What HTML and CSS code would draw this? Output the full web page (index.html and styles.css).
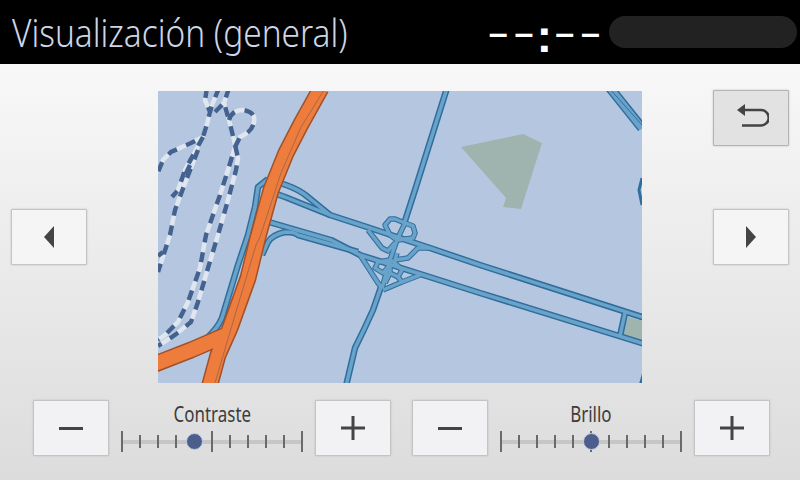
FILE: index.html
```html
<!DOCTYPE html>
<html lang="es">
<head>
    <meta charset="UTF-8">
    <meta name="viewport" content="width=device-width, initial-scale=1.0">
    <title>Visualización (general)</title>
    <link rel="stylesheet" href="styles.css">
</head>
<body>
    <header class="topbar">
        <div class="title-wrap"><h1 class="title">Visualización (general)</h1></div>
        <div class="clock">–<span class="dash-end">–</span><span class="colon">:</span>––</div>
        <div class="pill"></div>
    </header>

    <main class="screen">
        <section class="stage">
            <div class="side side-left">
                <button class="btn">
                    <svg width="10" height="22" viewBox="0 0 10 22"><path class="glyph" d="M10 0V22L0 11Z"/></svg>
                </button>
            </div>

            <svg class="map" width="484" height="292" viewBox="158 91 484 292">
                <defs>
                    <g id="roads">
                        <path d="M447 88L415 190L404 224"/>
                        <path d="M268 179L286 185Q300 190 308 197L330 215L370 228L430 248L480 265L645 318"/>
                        <path d="M268 191L285 197L330 215"/>
                        <path d="M268 179L258 187L255 207L248 235L238 265L222 318Q218 328 205 340"/>
                        <path d="M262 220L331 240L360 255L417 273L480 293L645 344"/>
                        <path d="M262 255L268 242Q272 235 285 232Q295 232 298 235L358 252"/>
                        <path d="M381 287L373 310Q364 330 355 348L346 386"/>
                        <path d="M625 313L620 336"/>
                    </g>
                    <g id="ramps">
                        <path d="M405 223L397 240L390 260L382 288"/>
                        <path d="M405 223L395 219L390 219L385 225L390 235L397 240"/>
                        <path d="M405 223L413 226L415 233L413 238L398 240"/>
                        <path d="M368 230L382 248L388 251L395 243"/>
                        <path d="M430 248L418 248L408 258L395 260L397 253"/>
                        <path d="M360 255L378 283L382 288"/>
                        <path d="M420 275L402 282L383 290"/>
                        <path d="M390 260L378 262L375 268L383 273L390 265"/>
                        <path d="M390 265L390 273L398 277L402 270L395 263L390 260"/>
                        <path d="M390 273L385 283M398 277L402 282"/>
                    </g>
                    <g id="rails">
                        <path d="M207 88L205 100L210 112L207 124L203 137L191 143L171 152L163 160L158 172"/>
                        <path d="M219 88L212 105L210 112"/>
                        <path d="M229 88L224 103L229 120L234 140L238 158L236 170L228 200L218 235L208 268L198 302L191 322L175 335L158 346"/>
                        <path d="M215 112L225 102"/>
                        <path d="M229 120Q232 110 243 110Q256 112 254 122Q252 132 240 137L235 147L228 170L220 195L206 235L200 268L188 302L178 322L165 335L158 340"/>
                        <path d="M203 137L185 170L178 190L172 197"/>
                        <path d="M198 150L187 178L175 210L170 235L158 272"/>
                        <path d="M190 165L183 180"/>
                        <path d="M163 252L158 256"/>
                    </g>
                </defs>

                <rect x="158" y="91" width="484" height="292" class="water"/>
                <path class="park" d="M461 147L523 134L542 143L521 209L503 207L506 198Z"/>
                <path class="park" d="M628 317L645 322L645 341L623 335Z"/>

                <use href="#rails" class="rail-base"/>
                <use href="#rails" class="rail-dash"/>

                <path class="trunk-casing" d="M610 88L642 128"/>
                <path class="trunk-fill" d="M610 88L642 128"/>
                <path class="road-line" d="M609 88L642 125"/>
                <path class="edge-casing" d="M642 178L639 190L642 205M644 372L640 386"/>

                <use href="#roads" class="road-casing"/>
                <use href="#ramps" class="ramp-casing"/>
                <use href="#roads" class="road-fill"/>
                <use href="#ramps" class="ramp-fill"/>

                <path class="hwy-casing" d="M321 88L301 124L286 153L271 190L258 237L248 278L230 328L218 355L209 388M226 335L191 350L155 364"/>
                <path class="hwy-fill" d="M321 88L301 124L286 153L271 190L258 237L248 278L230 328L218 355L209 388M226 335L191 350L155 364"/>
                <path class="hwy-line" d="M324 90L301 127L281 173L260 237L256 245L230 332L215 383"/>
            </svg>

            <div class="side side-right">
                <button class="btn btn-back">
                    <svg class="back-icon" width="32" height="24" viewBox="0 0 32 24">
                        <path class="glyph" d="M0 6L8 0V12Z"/>
                        <path class="glyph-line" d="M7 6H24A6.500 6.500 0 0 1 24 21.500H5"/>
                    </svg>
                </button>
                <button class="btn btn-next">
                    <svg width="10" height="22" viewBox="0 0 10 22"><path class="glyph" d="M0 0V22L10 11Z"/></svg>
                </button>
            </div>
        </section>

        <section class="controls">
            <div class="adjust">
                <button class="btn"><svg width="24" height="3" viewBox="0 0 24 3"><path class="glyph" d="M0 0H24V3H0Z"/></svg></button>
                <div class="slider">
                    <div class="slider-label">Contraste</div>
                    <div class="track">
                        <span class="tick major"></span><span class="tick"></span><span class="tick"></span><span class="tick"></span><span class="tick"></span>
                        <span class="tick major"></span><span class="tick"></span><span class="tick"></span><span class="tick"></span><span class="tick"></span>
                        <span class="tick major"></span>
                        <span class="knob" style="left: 40%"></span>
                    </div>
                </div>
                <button class="btn"><svg width="24" height="24" viewBox="0 0 24 24"><path class="glyph" d="M10.500 0H13.500V10.500H24V13.500H13.500V24H10.500V13.500H0V10.500H10.500Z"/></svg></button>
            </div>
            <div class="adjust">
                <button class="btn"><svg width="24" height="3" viewBox="0 0 24 3"><path class="glyph" d="M0 0H24V3H0Z"/></svg></button>
                <div class="slider">
                    <div class="slider-label">Brillo</div>
                    <div class="track">
                        <span class="tick major"></span><span class="tick"></span><span class="tick"></span><span class="tick"></span><span class="tick"></span>
                        <span class="tick major"></span><span class="tick"></span><span class="tick"></span><span class="tick"></span><span class="tick"></span>
                        <span class="tick major"></span>
                        <span class="knob" style="left: 50%"></span>
                    </div>
                </div>
                <button class="btn"><svg width="24" height="24" viewBox="0 0 24 24"><path class="glyph" d="M10.500 0H13.500V10.500H24V13.500H13.500V24H10.500V13.500H0V10.500H10.500Z"/></svg></button>
            </div>
        </section>
    </main>
</body>
</html>
```

FILE: styles.css
```css
* { box-sizing: border-box; }
body { margin: 0; width: 800px; height: 480px; overflow: hidden; font-family: "Noto Sans", sans-serif; background: #000; }

.topbar { height: 64px; background: #000; display: flex; align-items: center; padding: 0 3px 0 12px; }
.title-wrap { flex: 1; }
.title { display: inline-block; margin: 0; font-weight: 300; font-size: 38px; color: #cdd6e6; white-space: nowrap; transform: scaleX(0.88); transform-origin: left center; }
.clock { font-family: "Liberation Sans", sans-serif; font-weight: bold; font-size: 34px; letter-spacing: 7px; color: #fff; margin-right: 2px; display: flex; align-items: center; }
.dash-end { letter-spacing: 3px; }
.colon { font-size: 47px; letter-spacing: 3px; position: relative; top: 3px; }
.pill { width: 188px; height: 32px; background: #222; border-radius: 16px; }

.screen { height: 416px; background: linear-gradient(to bottom, #f8f8f8, #dcdcdc); padding-top: 27px; }
.stage { display: grid; grid-template-columns: 158px 484px 158px; height: 292px; }
.map { display: block; }

.side { display: flex; flex-direction: column; align-items: center; }
.side-left { padding: 118px 60px 0 0; }
.side-right { padding: 0 0 0 60px; margin-top: -1px; gap: 63px; }

.btn { width: 76px; height: 56px; padding: 0; flex: none; display: flex; align-items: center; justify-content: center; background: #f5f5f6; border: 1px solid #c4c4c4; box-shadow: 0 0 2px #bbb; border-radius: 1px; }
.btn-back { background: #e2e2e2; border-color: #b4b4b4; }
.back-icon { margin: 0 0 5px 3px; }
.glyph { fill: #444; }
.glyph-line { fill: none; stroke: #444; stroke-width: 2.500; }

.controls { display: flex; gap: 21px; padding: 17px 0 0 33px; }
.adjust { display: flex; gap: 12px; }
.adjust .btn { background: #f2f2f4; }
.slider { width: 182px; display: flex; flex-direction: column; align-items: center; }
.slider-label { height: 31px; line-height: 26px; font-size: 22px; color: #3c3c3c; transform: scaleX(0.77); }
.track { position: relative; width: 182px; height: 21px; display: flex; justify-content: space-between; align-items: center; background: linear-gradient(#c6c6c6, #c6c6c6) center / 100% 4px no-repeat; }
.tick { width: 2px; height: 13px; background: #6a6a6a; }
.tick.major { height: 21px; }
.knob { position: absolute; top: 2px; width: 17px; height: 17px; margin-left: -8px; border-radius: 50%; background: #4c5f8c; border: 1.500px solid #c9cfe8; }

.water { fill: #b5c7e0; }
.park { fill: #9fb4ae; }

.rail-base { fill: none; stroke: #dfe6f0; stroke-width: 4.500; }
.rail-dash { fill: none; stroke: #44628f; stroke-width: 4.500; stroke-dasharray: 10 10; }

.road-casing { fill: none; stroke: #2f6e9c; stroke-width: 6.500; stroke-linejoin: round; }
.road-fill { fill: none; stroke: #6aa3c9; stroke-width: 3.500; stroke-linejoin: round; }
.ramp-casing { fill: none; stroke: #2f6e9c; stroke-width: 5.500; stroke-linejoin: round; }
.ramp-fill { fill: none; stroke: #6aa3c9; stroke-width: 3.500; stroke-linejoin: round; }
.trunk-casing { fill: none; stroke: #2f6e9c; stroke-width: 10; }
.trunk-fill { fill: none; stroke: #6aa3c9; stroke-width: 7; }
.road-line { fill: none; stroke: #2f6e9c; stroke-width: 1; }
.edge-casing { fill: none; stroke: #2f6e9c; stroke-width: 3; }

.hwy-casing { fill: none; stroke: #a0512a; stroke-width: 17; stroke-linejoin: round; }
.hwy-fill { fill: none; stroke: #ee7c3c; stroke-width: 14; stroke-linejoin: round; }
.hwy-line { fill: none; stroke: #a8684a; stroke-width: 1; }
```
